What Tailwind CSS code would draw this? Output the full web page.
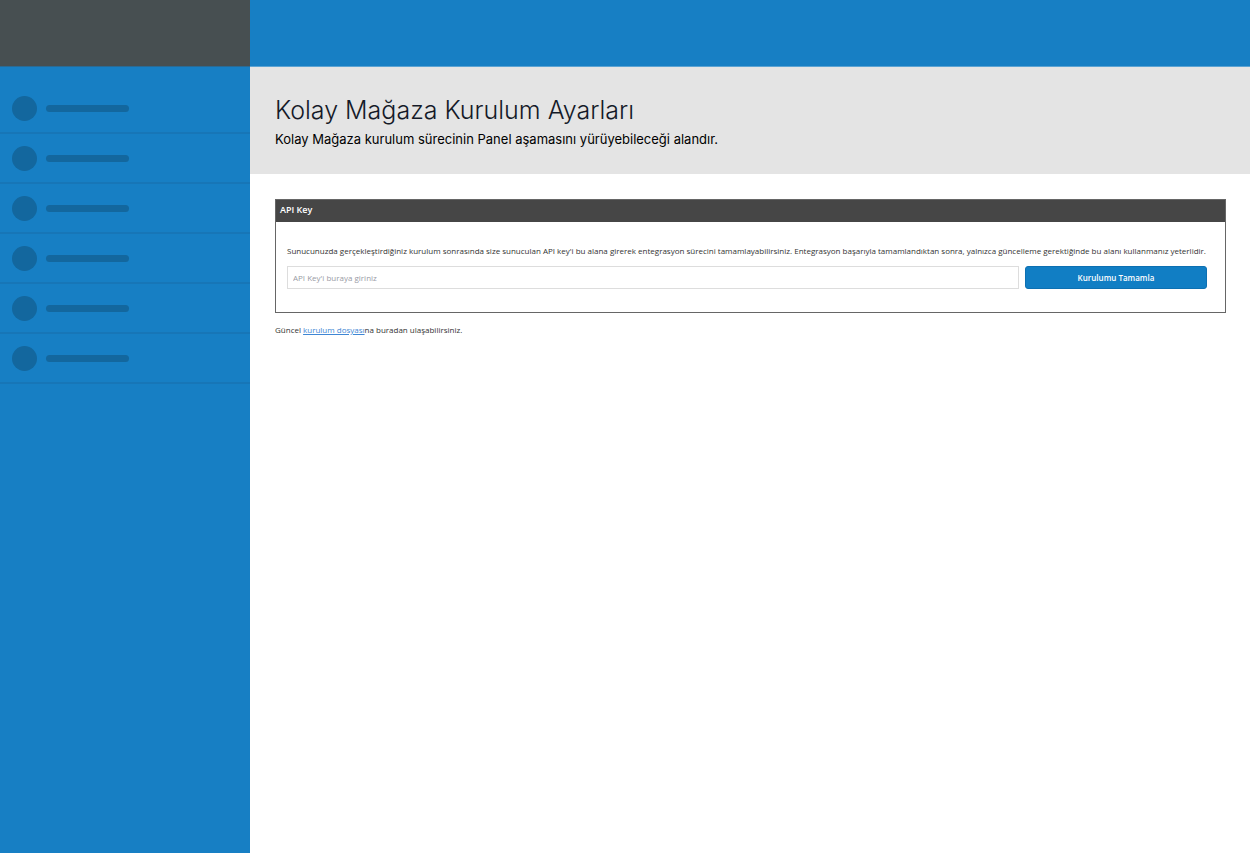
<!DOCTYPE html>
<html lang="tr">
<head>
<meta charset="utf-8">
<meta name="viewport" content="width=device-width, initial-scale=1">
<title>Kolay Mağaza Kurulum Ayarları</title>
<script src="https://cdn.jsdelivr.net/npm/@tailwindcss/browser@4"></script>
</head>
<body class="flex min-h-screen bg-white font-['Open_Sans',sans-serif] text-[8px] leading-3 text-[#333333]">
  <aside class="w-1/5 shrink-0 bg-[#177fc4]">
    <div class="mb-[17px] h-[67px] border-b border-[#2b6a93] bg-[#474f51]"></div>
    <ul>
      <li class="flex h-[50px] items-center gap-[9px] border-b-2 border-[#1776b7] pl-3"><span class="size-[25px] rounded-full bg-[#13679e]"></span><span class="h-[7px] w-[83px] rounded-full bg-[#13679e]"></span></li>
      <li class="flex h-[50px] items-center gap-[9px] border-b-2 border-[#1776b7] pl-3"><span class="size-[25px] rounded-full bg-[#13679e]"></span><span class="h-[7px] w-[83px] rounded-full bg-[#13679e]"></span></li>
      <li class="flex h-[50px] items-center gap-[9px] border-b-2 border-[#1776b7] pl-3"><span class="size-[25px] rounded-full bg-[#13679e]"></span><span class="h-[7px] w-[83px] rounded-full bg-[#13679e]"></span></li>
      <li class="flex h-[50px] items-center gap-[9px] border-b-2 border-[#1776b7] pl-3"><span class="size-[25px] rounded-full bg-[#13679e]"></span><span class="h-[7px] w-[83px] rounded-full bg-[#13679e]"></span></li>
      <li class="flex h-[50px] items-center gap-[9px] border-b-2 border-[#1776b7] pl-3"><span class="size-[25px] rounded-full bg-[#13679e]"></span><span class="h-[7px] w-[83px] rounded-full bg-[#13679e]"></span></li>
      <li class="flex h-[50px] items-center gap-[9px] border-b-2 border-[#1776b7] pl-3"><span class="size-[25px] rounded-full bg-[#13679e]"></span><span class="h-[7px] w-[83px] rounded-full bg-[#13679e]"></span></li>
    </ul>
  </aside>
  <div class="min-w-0 flex-1">
    <div class="h-[67px] border-b border-[#5ba3d3] bg-[#177fc4]"></div>
    <header class="bg-[#e4e4e4] px-[25px] pt-[27px] pb-[25px] font-[Inter,sans-serif]">
      <h1 class="text-[25px] leading-8 font-light text-[#151a28]">Kolay Mağaza Kurulum Ayarları</h1>
      <p class="pt-[3px] text-[13px] leading-5 text-black">Kolay Mağaza kurulum sürecinin Panel aşamasını yürüyebileceği alandır.</p>
    </header>
    <main class="pt-[25px] pr-6 pl-[25px]">
      <section class="border border-[#666666]">
        <h2 class="bg-[#464646] px-1 pt-[3px] pb-[5px] text-[9px] leading-[14px] font-semibold text-white">API Key</h2>
        <form class="px-[11px] pt-[23px] pb-[23px]">
          <label for="api-key" class="block whitespace-nowrap">Sunucunuzda gerçekleştirdiğiniz kurulum sonrasında size sunuculan API key'i bu alana girerek entegrasyon sürecini tamamlayabilirsiniz. Entegrasyon başarıyla tamamlandıktan sonra, yalnızca güncelleme gerektiğinde bu alanı kullanmanız yeterlidir.</label>
          <div class="mt-[9px] mr-[7px] flex gap-[6px]">
            <input id="api-key" type="text" placeholder="API Key'i buraya giriniz" class="h-[23px] min-w-0 flex-4 border border-[#dddddd] px-[5px] placeholder:text-[#999ba5]">
            <button type="button" class="h-[23px] flex-1 rounded-[3px] border border-[#0d70b2] bg-[#117ec4] font-semibold text-white">Kurulumu Tamamla</button>
          </div>
        </form>
      </section>
      <p class="mt-[11px]">Güncel <a href="#" class="text-[#3f86d4] underline">kurulum dosyası</a>na buradan ulaşabilirsiniz.</p>
    </main>
  </div>
</body>
</html>
